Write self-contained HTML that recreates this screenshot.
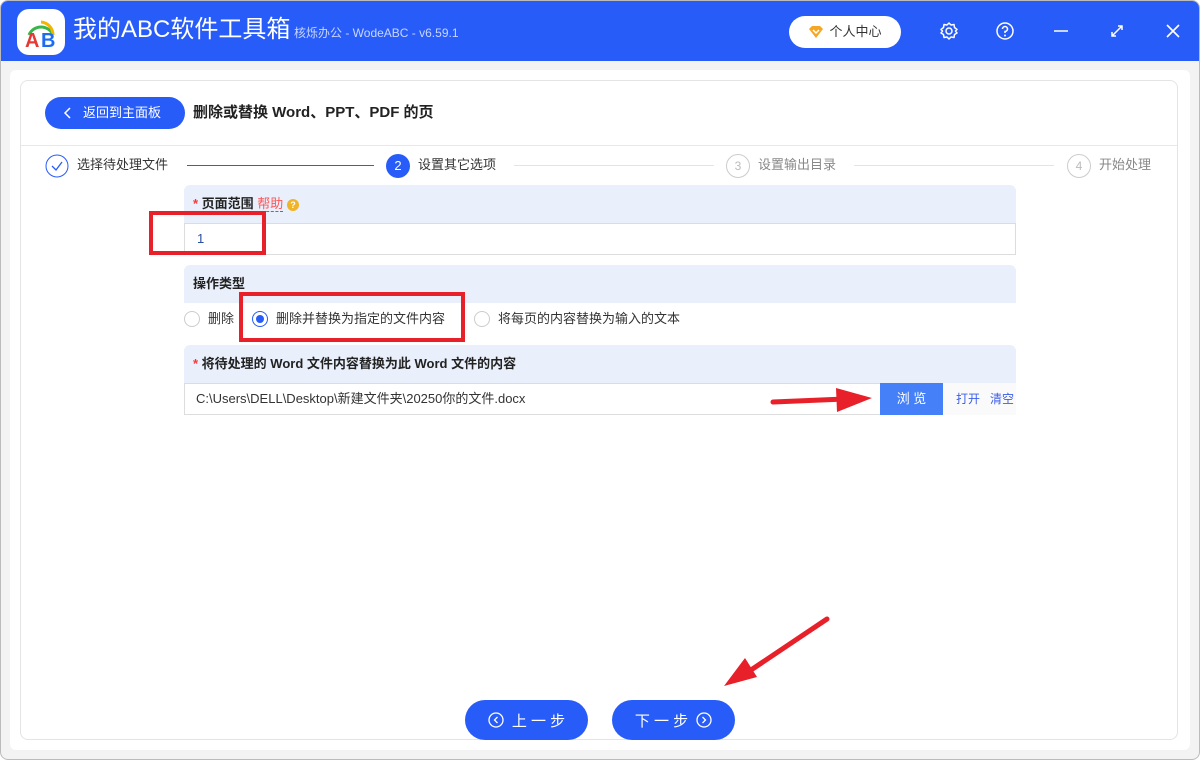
<!DOCTYPE html>
<html><head><meta charset="utf-8"><style>
*{margin:0;padding:0;box-sizing:border-box}
body{width:1200px;height:760px;overflow:hidden;background:#fff;font-family:"Liberation Sans","Noto Sans CJK SC",sans-serif;position:relative}
.win{position:absolute;left:0;top:0;width:1200px;height:760px;background:#f3f3f3;border:1px solid #bbb;border-radius:8px;overflow:hidden}
.bar{position:absolute;left:0;top:0;width:1200px;height:60px;background:#285cf8}
.abs{position:absolute}
.panel{position:absolute;left:10px;top:70px;width:1180px;height:680px;background:#fff;border-radius:6px}
.card{position:absolute;left:20px;top:80px;width:1158px;height:660px;border:1px solid #e4e4e4;border-radius:8px;background:#fff}
.sec{position:absolute;left:184px;width:832px;background:#e9effb;border-radius:6px 6px 0 0;font-size:13px;font-weight:bold;color:#222;line-height:18px}
.red{position:absolute;border:4px solid #e8202a}
.radio{position:absolute;width:16px;height:16px;border:1px solid #ccc;border-radius:50%;background:#fff}
.t13{font-size:13px;color:#333;position:absolute;line-height:16px}
.btn{position:absolute;top:700px;height:40px;background:#285cf8;border-radius:20px;color:#fff;font-size:15px;display:flex;align-items:center;justify-content:center;gap:8px}
</style></head><body>
<div class="win">
<div class="bar"></div>
<div class="abs" style="left:16px;top:8px;width:48px;height:46px;background:#fff;border-radius:12px"></div>
<svg class="abs" style="left:16px;top:8px" width="48" height="46" viewBox="0 0 48 46">
<path d="M12 26 A13 13 0 0 1 36 26" fill="none" stroke="#3ab54a" stroke-width="3"/>
<path d="M24 13 A13 13 0 0 1 36 26" fill="none" stroke="#f4b400" stroke-width="3"/>
<text x="8" y="38" font-size="20" font-weight="bold" fill="#e53935" font-family="Liberation Sans">A</text>
<text x="24" y="38" font-size="20" font-weight="bold" fill="#1e6cf0" font-family="Liberation Sans">B</text>
</svg>
<div class="abs" style="left:72px;top:13px;color:#fff;font-size:24px;line-height:32px">我的ABC软件工具箱</div>
<div class="abs" style="left:293px;top:24px;color:#c8d6ff;font-size:12px;line-height:16px">核烁办公 - WodeABC - v6.59.1</div>
<div class="abs" style="left:788px;top:15px;width:112px;height:32px;background:#fff;border-radius:16px;font-size:13px;color:#333;display:flex;align-items:center;justify-content:center;gap:5px;line-height:16px"><svg width="16" height="14" viewBox="0 0 16 14"><path d="M1 4 L4 1 H12 L15 4 L8 13 Z" fill="#f5a623"/><path d="M5 5 L8 8 L11 5" stroke="#fff" stroke-width="1.5" fill="none"/></svg>个人中心</div>
<svg class="abs" style="left:938px;top:20px" width="20" height="20" viewBox="0 0 20 20"><circle cx="10" cy="10" r="3" fill="none" stroke="#fff" stroke-width="1.5"/><path d="M10 2 L12 4 L15 3.5 L15.5 6.5 L18 8.5 L16.5 10 L18 12 L15.5 13.5 L15 16.5 L12 16 L10 18 L8 16 L5 16.5 L4.5 13.5 L2 12 L3.5 10 L2 8.5 L4.5 6.5 L5 3.5 L8 4 Z" fill="none" stroke="#fff" stroke-width="1.5" stroke-linejoin="round"/></svg>
<svg class="abs" style="left:994px;top:20px" width="20" height="20" viewBox="0 0 20 20"><circle cx="10" cy="10" r="8" fill="none" stroke="#fff" stroke-width="1.5"/><path d="M7.5 8 A2.5 2.5 0 1 1 10 10.5 V12" fill="none" stroke="#fff" stroke-width="1.5"/><circle cx="10" cy="14.5" r="1" fill="#fff"/></svg>
<div class="abs" style="left:1053px;top:29px;width:14px;height:2px;background:#c8d6ff"></div>
<svg class="abs" style="left:1108px;top:22px" width="16" height="16" viewBox="0 0 16 16"><path d="M3 13 L13 3 M9 3 H13 V7 M3 9 V13 H7" stroke="#fff" stroke-width="1.5" fill="none"/></svg>
<svg class="abs" style="left:1164px;top:22px" width="16" height="16" viewBox="0 0 16 16"><path d="M2 2 L14 14 M14 2 L2 14" stroke="#fff" stroke-width="1.6"/></svg>
</div>
<div class="panel"></div>
<div class="card"></div>
<div class="abs" style="left:21px;top:145px;width:1156px;height:1px;background:#e8e8e8"></div>
<div class="abs" style="left:45px;top:97px;width:140px;height:32px;background:#285cf8;border-radius:16px;color:#fff;font-size:13px;line-height:32px;padding-left:38px">返回到主面板</div>
<svg class="abs" style="left:63px;top:106px" width="10" height="14" viewBox="0 0 10 14"><path d="M7 2 L2 7 L7 12" stroke="#fff" stroke-width="1.5" fill="none"/></svg>
<div class="abs" style="left:193px;top:103px;font-size:15px;font-weight:bold;color:#222;line-height:20px">删除或替换 Word、PPT、PDF 的页</div>
<svg class="abs" style="left:45px;top:154px" width="24" height="24" viewBox="0 0 24 24"><circle cx="12" cy="12" r="11" fill="none" stroke="#285cf8" stroke-width="1"/><path d="M7 12 L11 16 L17 8" stroke="#285cf8" stroke-width="1.3" fill="none"/></svg>
<div class="t13" style="left:77px;top:157px">选择待处理文件</div>
<div class="abs" style="left:187px;top:165px;width:187px;height:1px;background:#285cf8"></div>
<div class="abs" style="left:386px;top:154px;width:24px;height:24px;border-radius:50%;background:#285cf8;color:#fff;font-size:13px;text-align:center;line-height:24px">2</div>
<div class="t13" style="left:418px;top:157px">设置其它选项</div>
<div class="abs" style="left:514px;top:165px;width:200px;height:1px;background:#e4e4e4"></div>
<div class="abs" style="left:726px;top:154px;width:24px;height:24px;border-radius:50%;border:1px solid #ccc;color:#bbb;font-size:12px;text-align:center;line-height:22px">3</div>
<div class="t13" style="left:758px;top:157px;color:#888">设置输出目录</div>
<div class="abs" style="left:854px;top:165px;width:200px;height:1px;background:#e4e4e4"></div>
<div class="abs" style="left:1067px;top:154px;width:24px;height:24px;border-radius:50%;border:1px solid #ccc;color:#bbb;font-size:12px;text-align:center;line-height:22px">4</div>
<div class="t13" style="left:1099px;top:157px;color:#888">开始处理</div>
<div class="sec" style="top:185px;height:38px;padding:10px 0 0 9px"><span style="color:#f33">*</span> 页面范围 <span style="color:#f55;font-weight:normal;border-bottom:1px dashed #f33">帮助</span> <span style="display:inline-block;width:12px;height:12px;border-radius:50%;background:#f0b429;color:#fff;font-size:9px;text-align:center;line-height:12px;vertical-align:middle">?</span></div>
<div class="abs" style="left:184px;top:223px;width:832px;height:32px;border:1px solid #ddd;background:#fff;font-size:13px;color:#2a4ea0;padding:7px 0 0 12px;line-height:16px">1</div>
<div class="red" style="left:149px;top:211px;width:117px;height:44px"></div>
<div class="sec" style="top:265px;height:38px;padding:10px 0 0 9px">操作类型</div>
<div class="radio" style="left:184px;top:311px"></div>
<div class="t13" style="left:208px;top:311px">删除</div>
<div class="radio" style="left:252px;top:311px;border-color:#285cf8"><div style="width:8px;height:8px;border-radius:50%;background:#285cf8;margin:3px"></div></div>
<div class="t13" style="left:276px;top:311px">删除并替换为指定的文件内容</div>
<div class="red" style="left:239px;top:292px;width:226px;height:50px"></div>
<div class="radio" style="left:474px;top:311px"></div>
<div class="t13" style="left:498px;top:311px">将每页的内容替换为输入的文本</div>
<div class="sec" style="top:345px;height:38px;padding:10px 0 0 9px"><span style="color:#f33">*</span> 将待处理的 Word 文件内容替换为此 Word 文件的内容</div>
<div class="abs" style="left:184px;top:383px;width:697px;height:32px;border:1px solid #ddd;background:#fff;font-size:13px;color:#333;padding:7px 0 0 11px;line-height:16px">C:\Users\DELL\Desktop\新建文件夹\20250你的文件.docx</div>
<div class="abs" style="left:880px;top:383px;width:63px;height:32px;background:#4580f8;color:#fff;font-size:13px;text-align:center;line-height:32px">浏 览</div>
<div class="abs" style="left:943px;top:383px;width:73px;height:32px;background:#fafafa;font-size:12px;color:#3c5ee8;line-height:32px;padding-left:13px">打开&nbsp;&nbsp;&nbsp;清空</div>
<svg class="abs" style="left:0;top:0" width="1200" height="760"><path d="M773 402 L845 399" stroke="#e8202a" stroke-width="5" stroke-linecap="round"/><path d="M836 388 L872 398 L837 412 Z" fill="#e8202a"/>
<path d="M827 619 L748 672" stroke="#e8202a" stroke-width="5" stroke-linecap="round"/><path d="M745 658 L724 686 L757 677 Z" fill="#e8202a"/></svg>
<div class="btn" style="left:465px;width:123px"><svg width="16" height="16" viewBox="0 0 16 16"><circle cx="8" cy="8" r="7" fill="none" stroke="#fff" stroke-width="1.3"/><path d="M9.5 5 L6.5 8 L9.5 11" stroke="#fff" stroke-width="1.3" fill="none"/></svg>上 一 步</div>
<div class="btn" style="left:612px;width:123px">下 一 步<svg width="16" height="16" viewBox="0 0 16 16"><circle cx="8" cy="8" r="7" fill="none" stroke="#fff" stroke-width="1.3"/><path d="M6.5 5 L9.5 8 L6.5 11" stroke="#fff" stroke-width="1.3" fill="none"/></svg></div>
</body></html>
